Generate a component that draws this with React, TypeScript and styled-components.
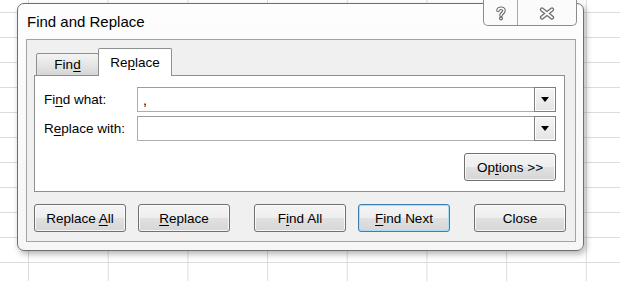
import React from "react";
import styled, { createGlobalStyle } from "styled-components";

const GlobalStyle = createGlobalStyle`
  html, body {
    margin: 0;
    padding: 0;
  }
  body {
    width: 620px;
    height: 281px;
    overflow: hidden;
    position: relative;
    background-color: #fff;
    background-image:
      linear-gradient(to right, #dcdcdc 1px, transparent 1px),
      linear-gradient(to bottom, #dcdcdc 1px, transparent 1px);
    background-size: 79.7px 25px;
    background-position: 28px 12px;
    font-family: "Liberation Sans", Arial, sans-serif;
  }
`;

const Window = styled.div`
  position: absolute;
  left: 17px;
  top: 3px;
  width: 567px;
  height: 248px;
  box-sizing: border-box;
  border: 1px solid #6f6f6f;
  border-radius: 7px;
  background: linear-gradient(#fdfdfd, #f6f6f6);
  box-shadow: 2px 3px 6px rgba(0, 0, 0, 0.3);
  display: flex;
  flex-direction: column;
`;

const TitleBar = styled.div`
  position: relative;
  height: 35px;
  display: flex;
  align-items: center;
  padding-left: 9px;
  padding-bottom: 1px;
  box-sizing: border-box;
  font-size: 15px;
  color: #000;
`;

const CaptionButtons = styled.div`
  position: absolute;
  top: -4px;
  right: 6px;
  width: 94px;
  height: 26px;
  box-sizing: border-box;
  border: 1px solid #8c8c8c;
  border-top: none;
  border-radius: 0 0 5px 5px;
  background: #fbfbfb;
  display: flex;
`;

const CaptionButton = styled.div<{ $width: number; $divider?: boolean }>`
  width: ${(p) => p.$width}px;
  height: 100%;
  display: flex;
  align-items: center;
  justify-content: center;
  padding-top: 2px;
  box-sizing: border-box;
  border-right: ${(p) => (p.$divider ? "1px solid #a8a8a8" : "none")};
`;

const Client = styled.div`
  flex: 1;
  margin: 0 7px 8px 8px;
  border: 1px solid #a3a3a3;
  background: #f0f0f0;
  padding: 8px 10px 9px 7px;
  display: flex;
  flex-direction: column;
`;

const TabStrip = styled.div`
  display: flex;
  align-items: flex-end;
  height: 28px;
  padding-left: 2px;
  margin-bottom: -1px;
  position: relative;
  z-index: 1;
`;

const Tab = styled.div<{ $active?: boolean }>`
  box-sizing: border-box;
  width: ${(p) => (p.$active ? 74 : 63)}px;
  height: ${(p) => (p.$active ? 28 : 23)}px;
  margin-left: ${(p) => (p.$active ? -1 : 0)}px;
  border: 1px solid #8e8f8f;
  border-bottom: ${(p) => (p.$active ? "none" : "1px solid #8e8f8f")};
  border-radius: 2px 2px 0 0;
  background: ${(p) =>
    p.$active ? "#fff" : "linear-gradient(#f4f4f4, #e6e6e6 50%, #d6d6d6)"};
  display: flex;
  align-items: center;
  justify-content: center;
  padding-bottom: ${(p) => (p.$active ? 1 : 0)}px;
  font-size: 13.5px;
  color: #000;
`;

const Panel = styled.div`
  height: 117px;
  box-sizing: border-box;
  border: 1px solid #8e8f8f;
  background: #fff;
  padding: 11px 8px 11px 9px;
  display: flex;
  flex-direction: column;
  gap: 4px;
`;

const FieldRow = styled.div`
  display: flex;
  align-items: center;
  height: 25px;
`;

const Label = styled.div`
  width: 93px;
  font-size: 13.5px;
  color: #000;
`;

const Field = styled.div`
  flex: 1;
  height: 25px;
  box-sizing: border-box;
  border: 1px solid #abadb3;
  border-top-color: #9a9ca3;
  background: #fff;
  display: flex;
  align-items: center;
`;

const FieldText = styled.div`
  flex: 1;
  padding-left: 5px;
  font-size: 14px;
  color: #000;
`;

const DropButton = styled.div`
  width: 22px;
  height: 25px;
  margin: -1px -1px -1px 0;
  box-sizing: border-box;
  border: 1px solid #7f7f7f;
  box-shadow: inset 0 0 0 1px #fff;
  background: linear-gradient(#f6f6f6, #e4e4e4);
  display: flex;
  align-items: center;
  justify-content: center;
`;

const OptionsRow = styled.div`
  display: flex;
  justify-content: flex-end;
  margin-top: 8px;
`;

const ButtonRow = styled.div`
  display: flex;
  gap: 24px;
  margin-top: 12px;
`;

const ButtonGroup = styled.div`
  display: flex;
  gap: 12px;
`;

const Button = styled.div<{ $focused?: boolean }>`
  width: 92px;
  height: 28px;
  flex-shrink: 0;
  box-sizing: border-box;
  border: 1px solid ${(p) => (p.$focused ? "#3c7fb1" : "#707070")};
  border-radius: 3px;
  background: linear-gradient(#f4f4f4 0%, #eeeeee 50%, #e1e1e1 50%, #d6d6d6 100%);
  box-shadow: inset 0 0 0 1px
    ${(p) => (p.$focused ? "#a8dcf6" : "rgba(255, 255, 255, 0.75)")};
  display: flex;
  align-items: center;
  justify-content: center;
  font-size: 13.5px;
  color: #000;
`;

const Key = styled.span`
  text-decoration: underline;
  text-underline-offset: 2px;
`;

function HelpIcon() {
  return (
    <svg width="10" height="15" viewBox="0 0 10 15">
      <path d="M2 4.5 C2 1.5 8 1.5 8 4.5 C8 7 5 7 5 9.5" fill="none" stroke="#6c6c6c" strokeWidth="3.6" strokeLinecap="round" />
      <circle cx="5" cy="12.5" r="2" fill="#6c6c6c" />
      <path d="M2 4.5 C2 1.5 8 1.5 8 4.5 C8 7 5 7 5 9.5" fill="none" stroke="#fff" strokeWidth="1.4" strokeLinecap="round" />
      <circle cx="5" cy="12.5" r="0.8" fill="#fff" />
    </svg>
  );
}

function CloseIcon() {
  return (
    <svg width="16" height="13" viewBox="0 0 16 13">
      <path d="M3 2.5 L13 10.5 M13 2.5 L3 10.5" stroke="#6c6c6c" strokeWidth="4.2" strokeLinecap="round" />
      <path d="M3 2.5 L13 10.5 M13 2.5 L3 10.5" stroke="#fbfbfb" strokeWidth="1.8" strokeLinecap="round" />
    </svg>
  );
}

function DropArrow() {
  return (
    <svg width="8" height="5" viewBox="0 0 8 5">
      <path d="M0 0 H8 L4 5 Z" fill="#000" />
    </svg>
  );
}

export default function App() {
  return (
    <>
      <GlobalStyle />
      <Window>
        <TitleBar>
          Find and Replace
          <CaptionButtons>
            <CaptionButton $width={34} $divider>
              <HelpIcon />
            </CaptionButton>
            <CaptionButton $width={58}>
              <CloseIcon />
            </CaptionButton>
          </CaptionButtons>
        </TitleBar>
        <Client>
          <TabStrip>
            <Tab>
              <span>
                Fin<Key>d</Key>
              </span>
            </Tab>
            <Tab $active>
              <span>
                Re<Key>p</Key>lace
              </span>
            </Tab>
          </TabStrip>
          <Panel>
            <FieldRow>
              <Label>
                Fi<Key>n</Key>d what:
              </Label>
              <Field>
                <FieldText>,</FieldText>
                <DropButton>
                  <DropArrow />
                </DropButton>
              </Field>
            </FieldRow>
            <FieldRow>
              <Label>
                R<Key>e</Key>place with:
              </Label>
              <Field>
                <FieldText />
                <DropButton>
                  <DropArrow />
                </DropButton>
              </Field>
            </FieldRow>
            <OptionsRow>
              <Button>
                <span>
                  Op<Key>t</Key>ions &gt;&gt;
                </span>
              </Button>
            </OptionsRow>
          </Panel>
          <ButtonRow>
            <ButtonGroup>
              <Button>
                <span>
                  Replace <Key>A</Key>ll
                </span>
              </Button>
              <Button>
                <span>
                  <Key>R</Key>eplace
                </span>
              </Button>
            </ButtonGroup>
            <ButtonGroup>
              <Button>
                <span>
                  F<Key>i</Key>nd All
                </span>
              </Button>
              <Button $focused>
                <span>
                  <Key>F</Key>ind Next
                </span>
              </Button>
            </ButtonGroup>
            <Button>
              <span>Close</span>
            </Button>
          </ButtonRow>
        </Client>
      </Window>
    </>
  );
}
